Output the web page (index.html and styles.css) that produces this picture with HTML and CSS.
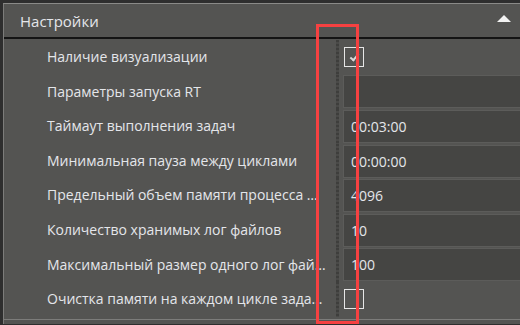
FILE: index.html
```html
<!DOCTYPE html>
<html lang="ru">
<head>
    <meta charset="UTF-8">
    <title>Настройки</title>
    <link rel="stylesheet" href="styles.css">
</head>
<body>
    <div class="panel">
        <div class="panel-header">
            <span class="panel-title">Настройки</span>
            <span class="collapse-arrow"></span>
        </div>
        <div class="props">
            <div class="prop-row">
                <div class="prop-name">Наличие визуализации</div>
                <div class="grip"></div>
                <div class="prop-value"><span class="check checked"></span></div>
            </div>
            <div class="prop-row">
                <div class="prop-name">Параметры запуска RT</div>
                <div class="grip"></div>
                <div class="prop-value"><div class="field"></div></div>
            </div>
            <div class="prop-row">
                <div class="prop-name">Таймаут выполнения задач</div>
                <div class="grip"></div>
                <div class="prop-value"><div class="field">00:03:00</div></div>
            </div>
            <div class="prop-row">
                <div class="prop-name">Минимальная пауза между циклами</div>
                <div class="grip"></div>
                <div class="prop-value"><div class="field">00:00:00</div></div>
            </div>
            <div class="prop-row">
                <div class="prop-name">Предельный объем памяти процесса RT, МБ</div>
                <div class="grip"></div>
                <div class="prop-value"><div class="field">4096</div></div>
            </div>
            <div class="prop-row">
                <div class="prop-name">Количество хранимых лог файлов</div>
                <div class="grip"></div>
                <div class="prop-value"><div class="field">10</div></div>
            </div>
            <div class="prop-row">
                <div class="prop-name">Максимальный размер одного лог файла, МБ</div>
                <div class="grip"></div>
                <div class="prop-value"><div class="field">100</div></div>
            </div>
            <div class="prop-row">
                <div class="prop-name">Очистка памяти на каждом цикле задачи</div>
                <div class="grip"></div>
                <div class="prop-value"><span class="check"></span></div>
            </div>
        </div>
        <div class="panel-bottom"></div>
    </div>
    <!-- пометка поверх скриншота -->
    <div class="highlight"></div>
</body>
</html>
```

FILE: styles.css
```css
body {
    margin: 0;
    padding: 0;
    width: 520px;
    height: 325px;
    overflow: hidden;
    background-color: #2e2e2e;
    font-family: "Open Sans", "Noto Sans", sans-serif;
    font-size: 14px;
    color: #e4e6ea;
    position: relative;
}
.panel {
    margin: 3px 0 0 3px;
    border-left: 1px solid #7c7c7a;
    border-top: 1px solid #8a8a88;
    background-color: #545452;
    height: 321px;
    box-sizing: border-box;
}
.panel-header {
    height: 33px;
    display: flex;
    align-items: center;
    justify-content: space-between;
    padding: 0 9px 0 16px;
    border-bottom: 2px solid #141414;
    font-size: 15px;
}
.collapse-arrow {
    width: 0;
    height: 0;
    border-left: 7px solid transparent;
    border-right: 7px solid transparent;
    border-bottom: 7px solid #f2f2f2;
    margin-top: -4px;
}
.props {
    padding-top: 1px;
}
.prop-row {
    display: grid;
    grid-template-columns: 332px 4px 1fr;
    height: 34.6px;
}
.prop-name {
    padding-left: 43px;
    padding-right: 10px;
    white-space: nowrap;
    overflow: hidden;
    text-overflow: ellipsis;
    line-height: 34px;
}
.grip {
    background-image: repeating-linear-gradient(to bottom, #3e3e3c 0 2px, #4a4a48 2px 4px);
    margin-right: 1px;
}
.prop-value {
    display: flex;
    align-items: center;
    padding-left: 3px;
}
.field {
    box-sizing: border-box;
    width: 100%;
    height: 33px;
    background-color: #454543;
    border: 1px solid #5c5c5a;
    border-right: none;
    padding-left: 7px;
    line-height: 31px;
}
.check {
    width: 18px;
    height: 18px;
    border: 1px solid #e6e6e6;
    margin-left: 1px;
    position: relative;
}
.check.checked::after {
    content: "";
    position: absolute;
    left: 7px;
    top: 4px;
    width: 3px;
    height: 7px;
    border-right: 2px solid #d8d8d8;
    border-bottom: 2px solid #d8d8d8;
    transform: rotate(40deg);
}
.panel-bottom {
    border-top: 1px solid #7c7c7a;
    margin-top: 2px;
}
.highlight {
    position: absolute;
    left: 316px;
    top: 24px;
    width: 43px;
    height: 300px;
    box-sizing: border-box;
    border: 3.5px solid #f64141;
}
```
